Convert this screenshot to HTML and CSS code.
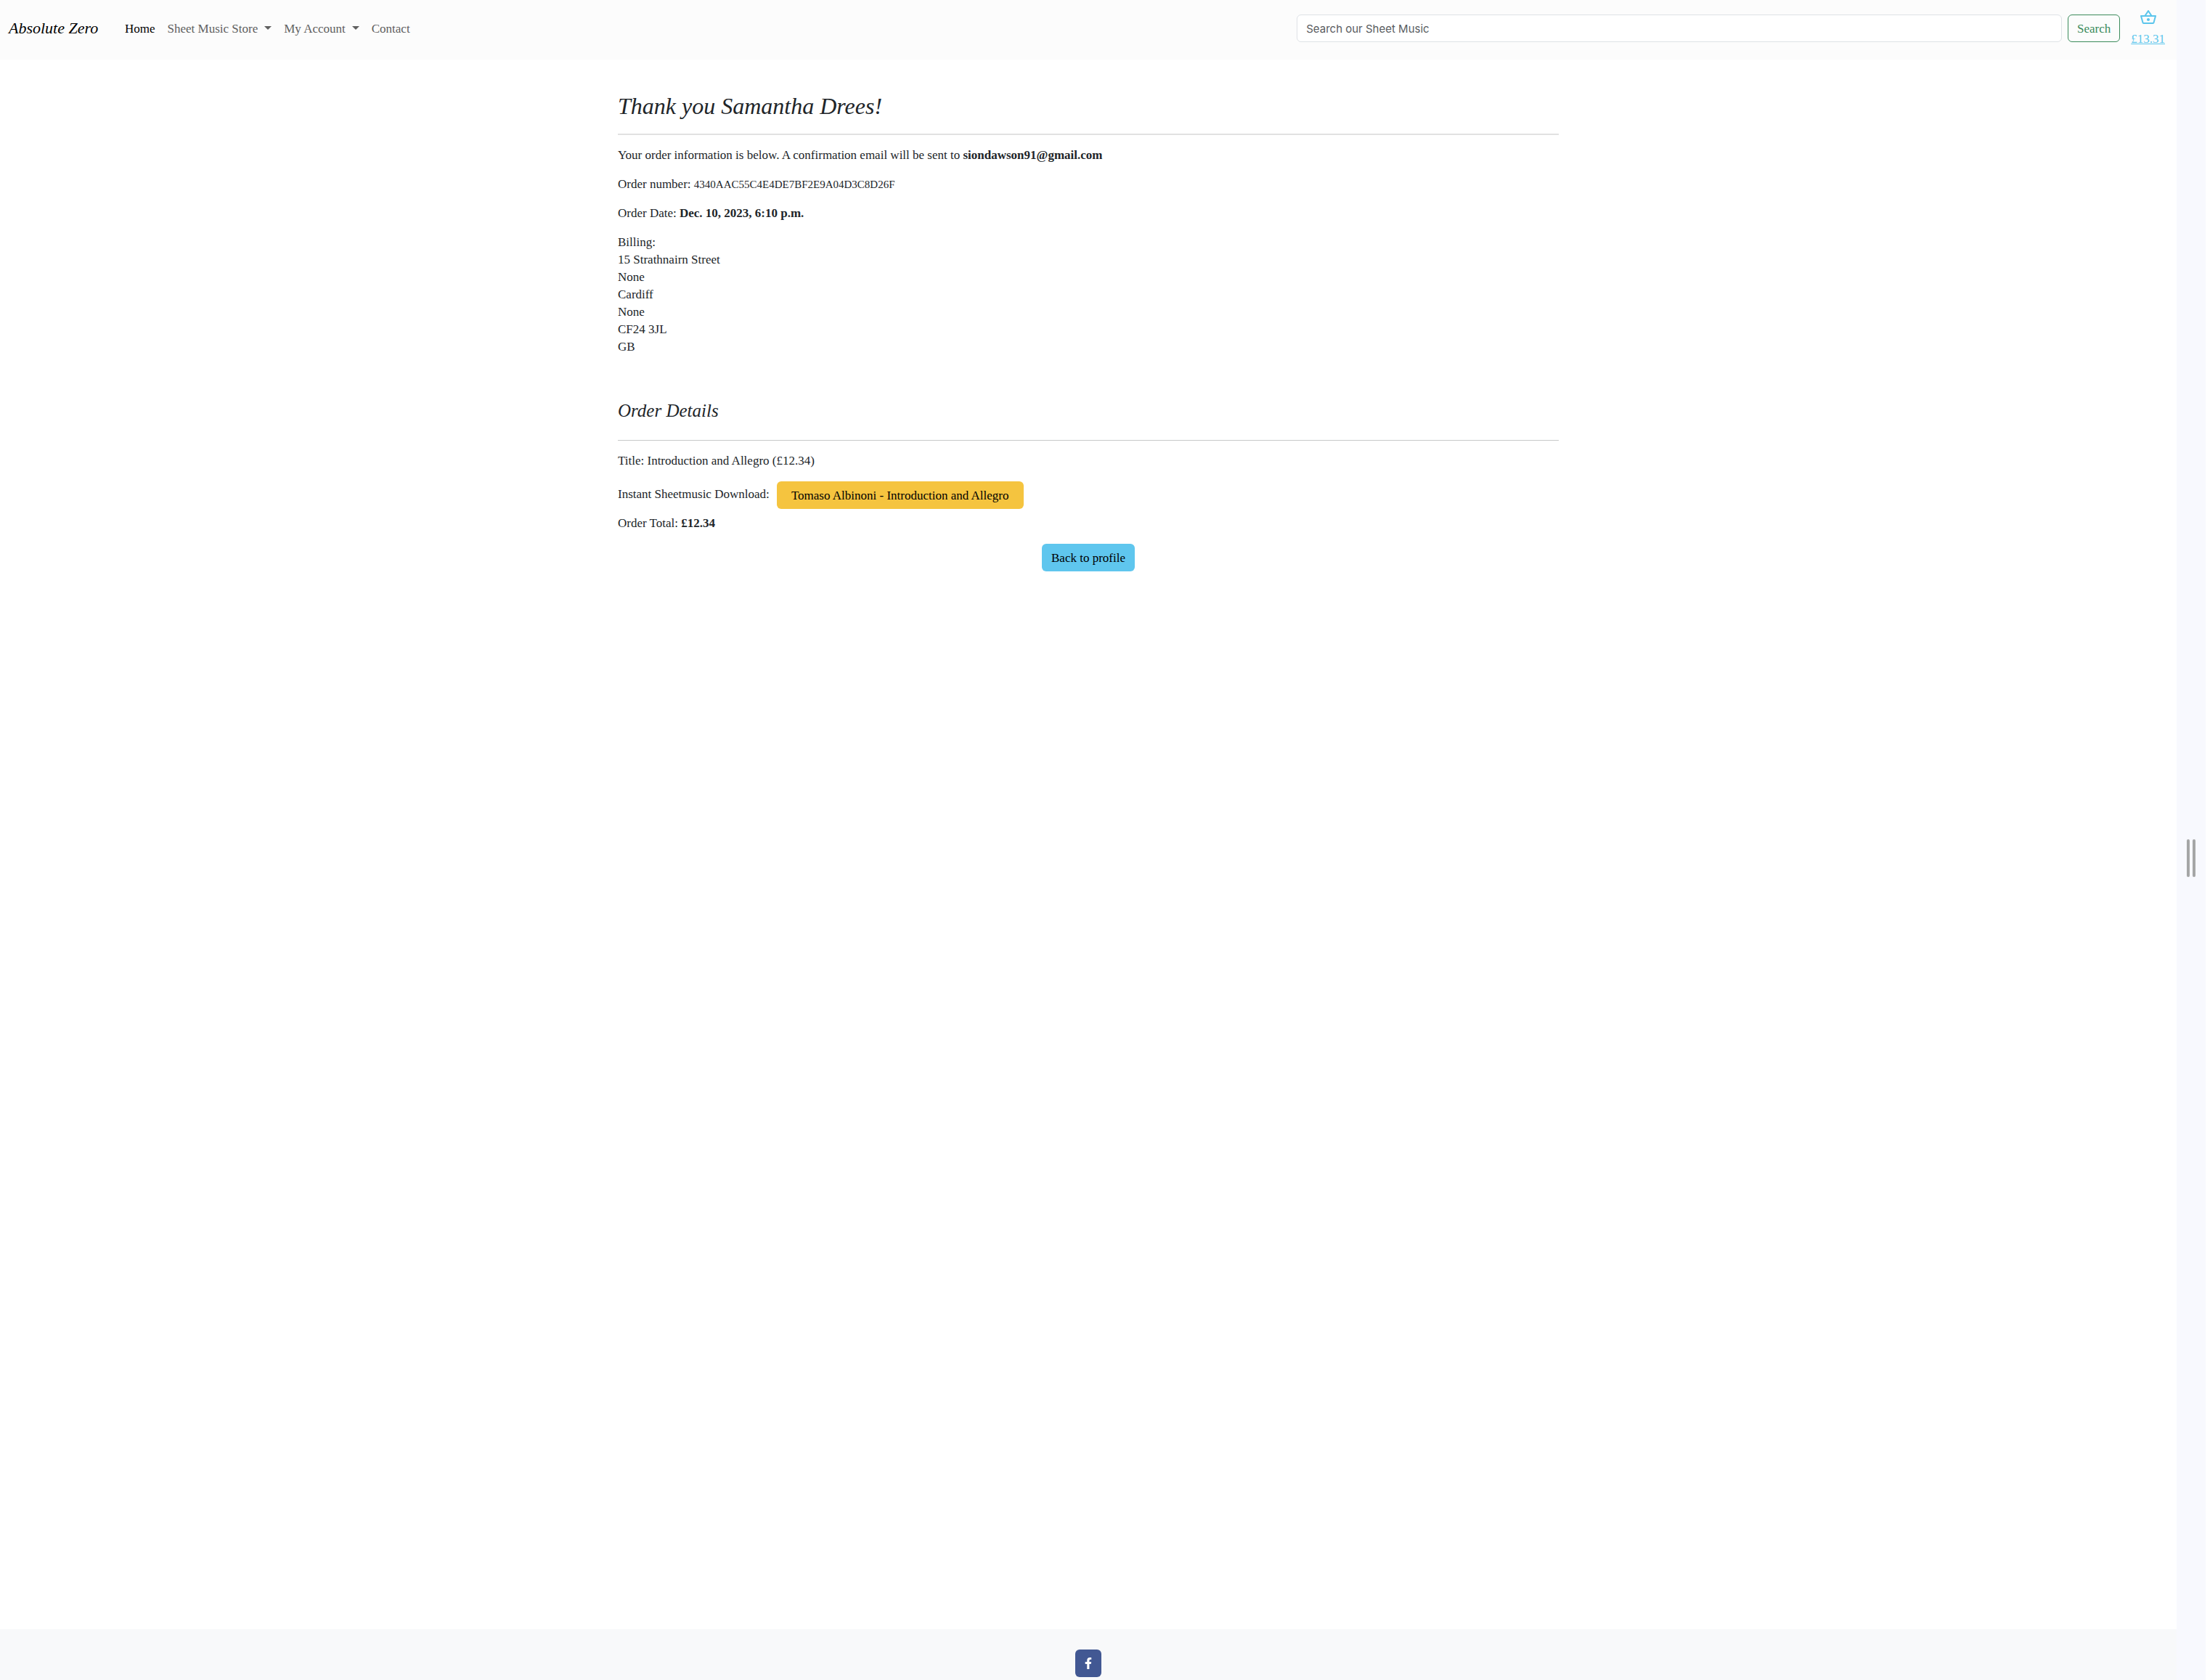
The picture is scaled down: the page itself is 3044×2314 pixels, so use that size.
FILE: index.html
```html
<!DOCTYPE html>
<html lang="en">
<head>
<meta charset="utf-8">
<meta name="viewport" content="width=device-width, initial-scale=1">
<title>Absolute Zero</title>
<link rel="stylesheet" href="styles.css">
</head>
<body>
<div class="page">
  <header class="navbar">
    <a class="brand" href="#">Absolute Zero</a>
    <nav class="nav-links">
      <a class="nav-link active" href="#">Home</a>
      <a class="nav-link dropdown" href="#">Sheet Music Store</a>
      <a class="nav-link dropdown" href="#">My Account</a>
      <a class="nav-link" href="#">Contact</a>
    </nav>
    <form class="search">
      <input class="search-input" type="search" placeholder="Search our Sheet Music" aria-label="Search our Sheet Music">
      <button class="btn btn-outline" type="submit">Search</button>
    </form>
    <a class="basket" href="#">
      <svg class="basket-icon" viewBox="0 0 24 24" aria-hidden="true"><path d="M22 9h-4.790l-4.380-6.560c-.19-.28-.51-.42-.83-.42s-.64.140-.83.430L6.790 9H2c-.55 0-1 .45-1 1 0 .09.010.180.040.270l2.540 9.270c.230.840 1 1.460 1.920 1.460h13c.92 0 1.690-.62 1.930-1.460l2.540-9.270L23 10c0-.55-.45-1-1-1zM12 4.800 14.800 9H9.200L12 4.800zM18.500 19l-12.990.010L3.310 11H20.700l-2.200 8zM12 13c-1.100 0-2 .9-2 2s.9 2 2 2 2-.9 2-2-.9-2-2-2z"/></svg>
      <span class="basket-total">£13.31</span>
    </a>
  </header>

  <main class="container">
    <h1 class="title">Thank you Samantha Drees!</h1>
    <hr class="rule rule-thick">
    <p>Your order information is below. A confirmation email will be sent to <strong>siondawson91@gmail.com</strong></p>
    <p>Order number: <span class="order-number">4340AAC55C4E4DE7BF2E9A04D3C8D26F</span></p>
    <p>Order Date: <strong>Dec. 10, 2023, 6:10 p.m.</strong></p>
    <address class="billing">Billing:<br>15 Strathnairn Street<br>None<br>Cardiff<br>None<br>CF24 3JL<br>GB</address>
    <h2 class="subtitle">Order Details</h2>
    <hr class="rule">
    <p>Title: Introduction and Allegro (£12.34)</p>
    <div class="download">
      <span>Instant Sheetmusic Download:</span>
      <a class="btn btn-warning" href="#">Tomaso Albinoni - Introduction and Allegro</a>
    </div>
    <p>Order Total: <strong>£12.34</strong></p>
    <div class="actions"><a class="btn btn-info" href="#">Back to profile</a></div>
  </main>

  <footer class="footer">
    <a class="social" href="#" aria-label="Facebook">
      <svg class="social-icon" viewBox="0 0 320 512" aria-hidden="true"><path d="M279.140 288l14.220-92.660h-88.910v-60.130c0-25.350 12.420-50.060 52.240-50.060h40.420V6.260S260.430 0 225.360 0c-73.220 0-121.080 44.380-121.080 124.720v70.620H22.890V288h81.390v224h100.170V288z"/></svg>
    </a>
  </footer>
</div>
<div class="resizer"><span class="grip"></span><span class="grip"></span></div>
</body>
</html>
```

FILE: styles.css
```css
* { box-sizing: border-box; }

body {
  margin: 0;
  padding-right: 6px;
  min-height: 100vh;
  display: flex;
  background: #fff;
  color: #212529;
  font: 17px/24px "Liberation Serif", serif;
}

.page {
  flex: 1;
  min-width: 0;
  display: flex;
  flex-direction: column;
}

a { color: inherit; text-decoration: none; }
p { margin: 0 0 16px; }

/* Navigation */
.navbar {
  display: flex;
  align-items: center;
  padding: 8px 16px 8px 12px;
  min-height: 82px;
  background: #fcfcfc;
}

.brand {
  width: 152px;
  padding-bottom: 4px;
  color: #000;
  font-size: 22px;
  line-height: 32px;
  font-style: italic;
}

.nav-links { display: flex; flex: 1; gap: 1px; padding-bottom: 2px; }
.nav-link { padding: 0 8px; color: #606060; white-space: nowrap; }
.nav-link.active { color: #000; }
.dropdown::after {
  content: "";
  display: inline-block;
  margin-left: 9px;
  vertical-align: 4px;
  border: 5px solid transparent;
  border-top-color: currentColor;
  border-bottom: 0;
}

.search { display: flex; gap: 8px; width: 1134px; padding-bottom: 4px; }
.search-input {
  flex: 1;
  min-width: 0;
  height: 38px;
  padding: 0 12px;
  border: 1px solid #dee2e6;
  border-radius: 6px;
  background: #fff;
  color: #212529;
  font: 15px/24px Inter, sans-serif;
  appearance: none;
}
.search-input::placeholder { color: #595c5f; opacity: 1; }

.basket {
  display: flex;
  flex-direction: column;
  align-items: center;
  gap: 2px;
  margin-left: 15px;
  color: #5bc5ec;
}
.basket-icon { width: 24px; height: 24px; fill: currentColor; }
.basket-total { text-decoration: underline; line-height: 32px; }

/* Buttons */
.btn {
  display: inline-block;
  height: 38px;
  padding: 7px 12px 5px;
  border: 1px solid transparent;
  border-radius: 6px;
  color: #000;
  font: inherit;
  text-align: center;
  white-space: nowrap;
}
.btn-outline { border-color: #3b8b5b; background: transparent; color: #3b8b5b; }
.btn-warning { min-width: 340px; background: #f5c43f; }
.btn-info { background: #5fc6ee; }

/* Order summary */
.container {
  flex: 1;
  width: 100%;
  max-width: 1320px;
  margin: 0 auto;
  padding: 40px 12px 0;
}
.title { margin: 0 0 14px; font-size: 32px; line-height: 48px; font-weight: 400; font-style: italic; }
.subtitle { margin: 0 0 20px; font-size: 25px; line-height: 40px; font-weight: 400; font-style: italic; }
.rule { margin: 0 0 16px; border: 0; border-top: 1px solid #c7c8c9; }
.rule-thick { border-top: 2px solid #e1e1e1; }
.order-number { font-size: 15px; }
.billing { margin-bottom: 56px; font-style: normal; }
.download { display: flex; gap: 10px; margin-bottom: 8px; }
.download span { padding-top: 6px; }
.actions { text-align: center; }

/* Footer */
.footer {
  display: flex;
  justify-content: center;
  padding: 28px 0 4px;
  background: #f8f9fa;
}
.social {
  display: flex;
  align-items: center;
  justify-content: center;
  width: 36px;
  height: 38px;
  border-radius: 6px;
  background: #425893;
}
.social-icon { height: 16px; width: 10px; fill: #fff; }

/* Resize handle */
.resizer {
  display: flex;
  align-items: center;
  justify-content: center;
  gap: 4px;
  width: 40px;
  padding-top: 50px;
  background: #f8f9fe;
}
.grip { width: 4px; height: 52px; border-radius: 2px; background: #a5a6a6; }
```
